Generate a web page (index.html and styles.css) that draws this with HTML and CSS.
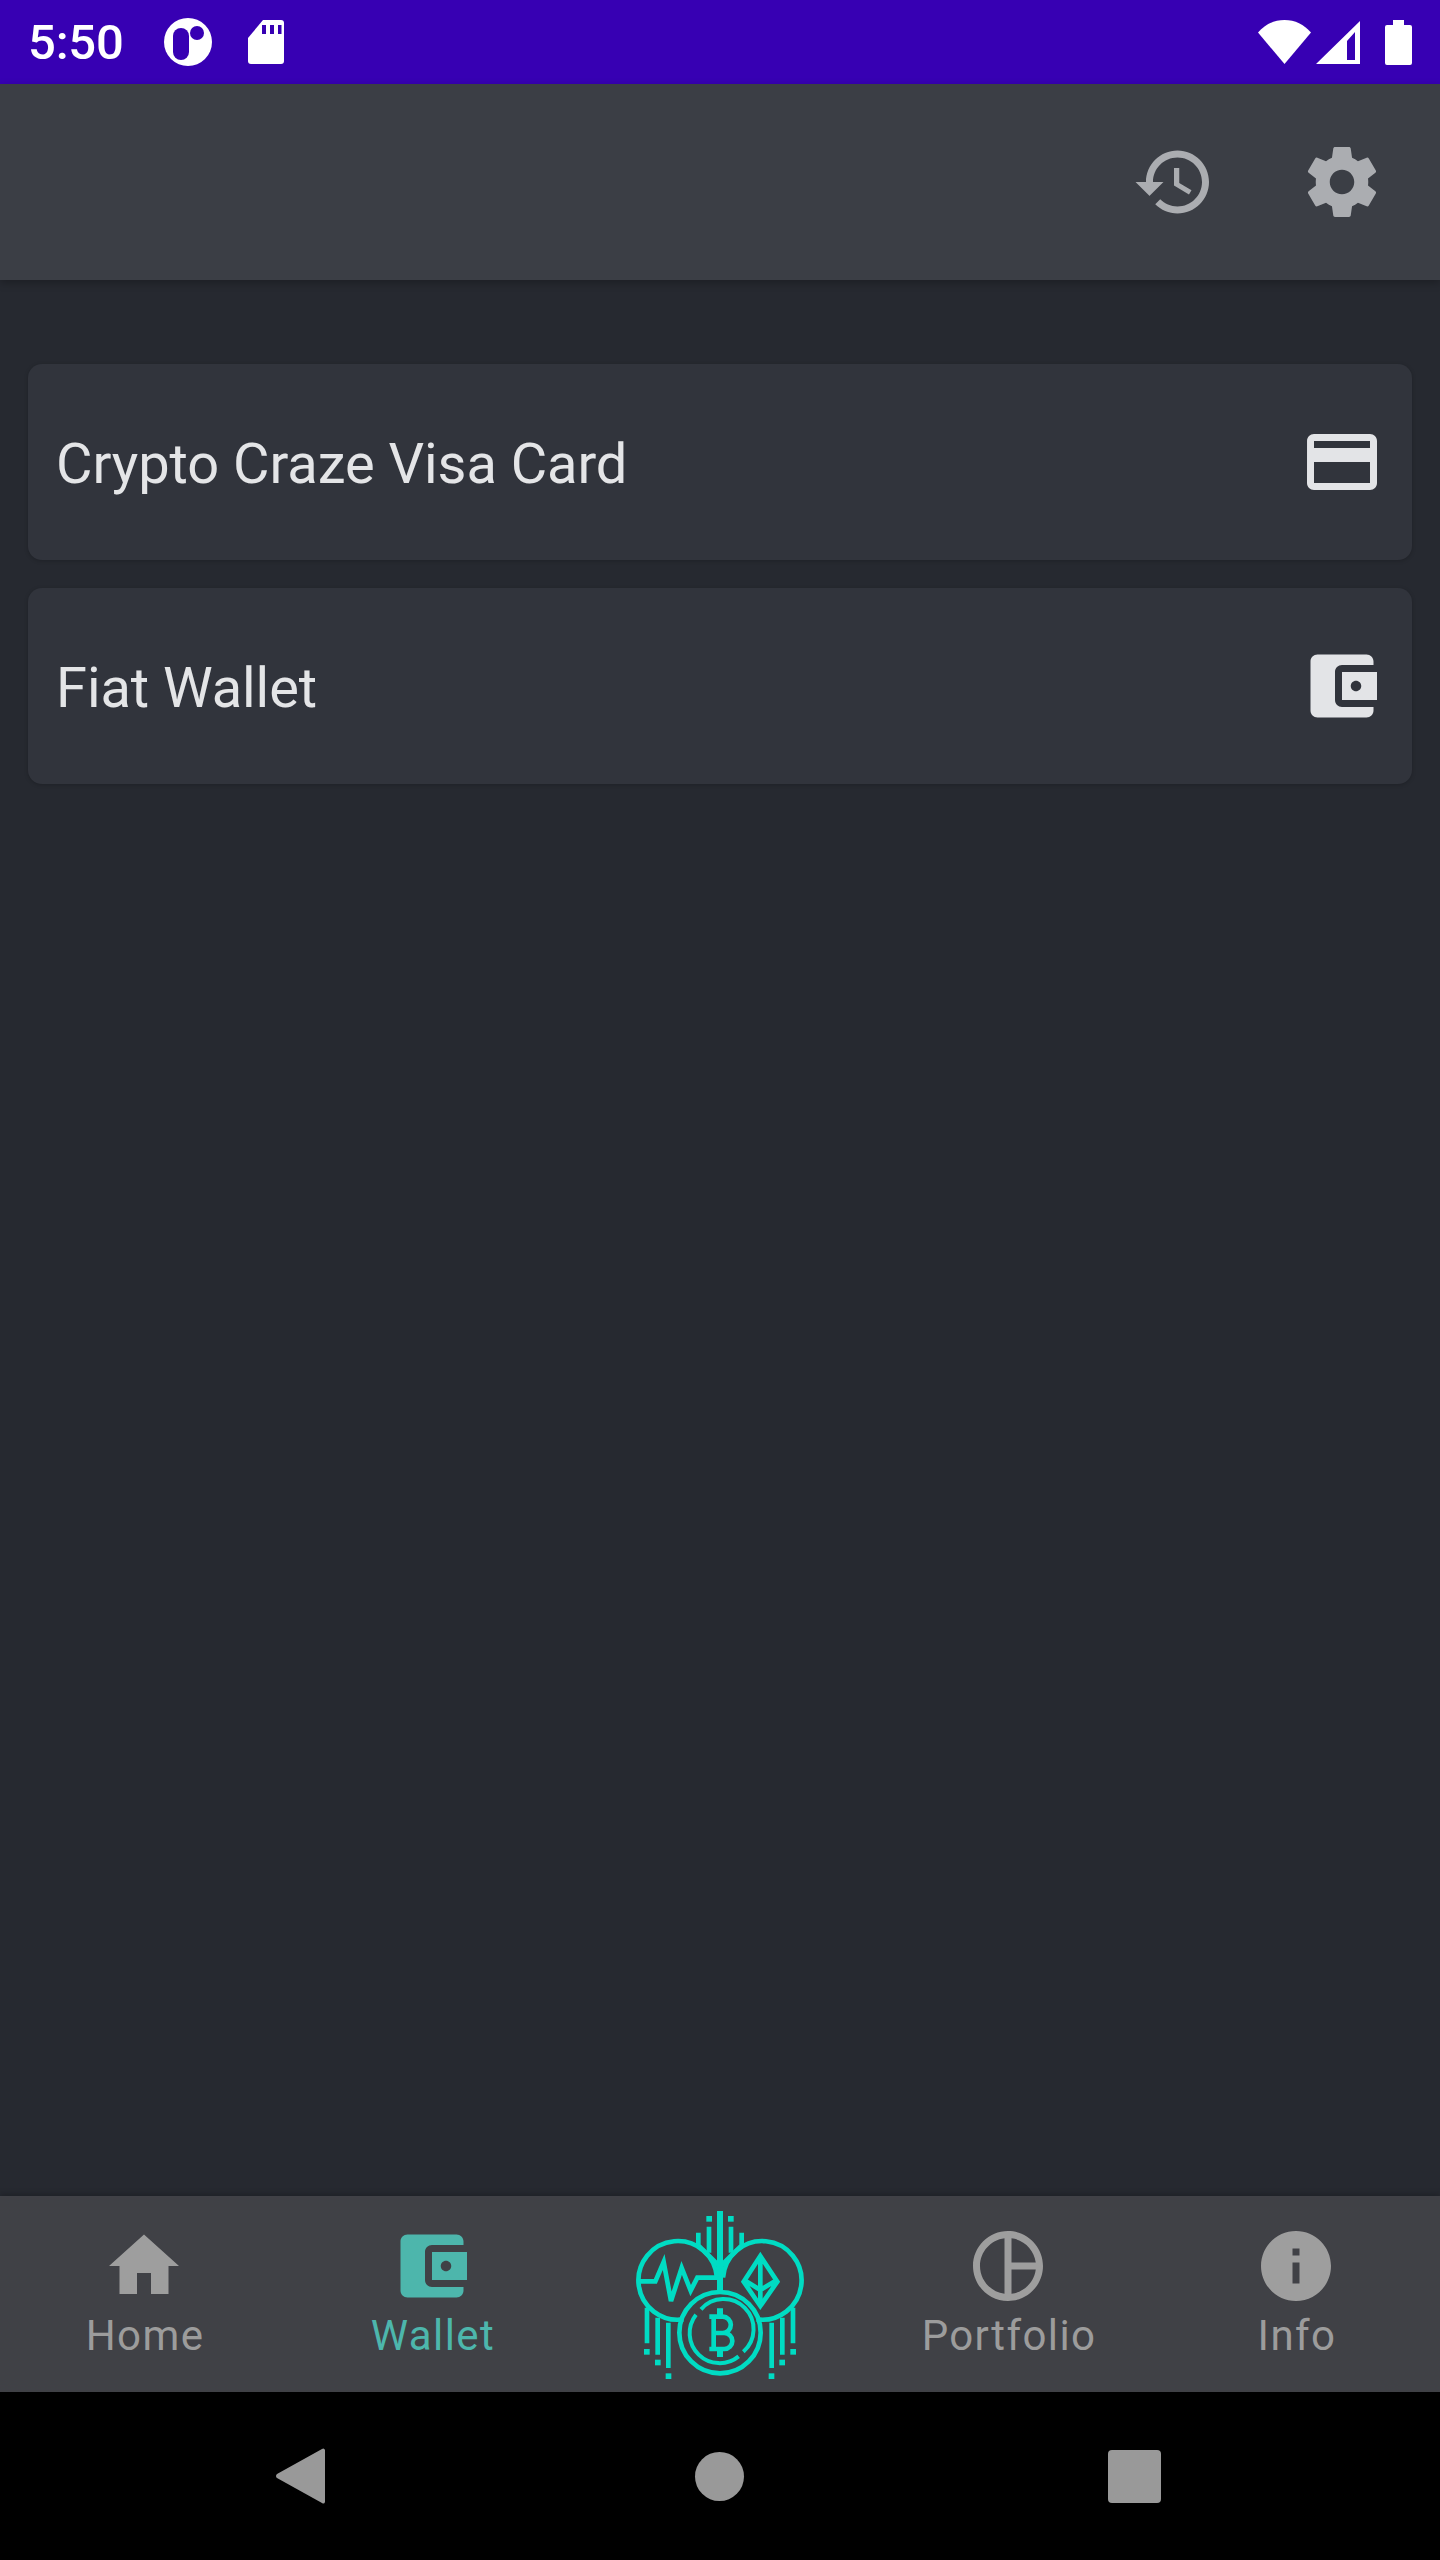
FILE: index.html
```html
<!DOCTYPE html>
<html lang="en">
<head>
<meta charset="utf-8">
<title>Crypto Craze Wallet</title>
<link rel="stylesheet" href="styles.css">
</head>
<body>
<div class="screen">
  <header class="status">
    <div class="status-left">
      <span class="clock">5:50</span>
      <svg class="ic-notif" viewBox="0 0 48 48"><circle class="white" cx="24" cy="24" r="24"/><rect class="purple" x="9" y="10" width="16" height="32" rx="8"/><circle class="purple" cx="33" cy="15" r="7"/></svg>
      <svg class="ic-sd" viewBox="0 0 36 44"><path class="white" d="M15 0H33a3 3 0 0 1 3 3V41a3 3 0 0 1-3 3H3a3 3 0 0 1-3-3V18z"/><rect class="purple" x="14" y="5" width="4" height="9"/><rect class="purple" x="22" y="5" width="4" height="9"/><rect class="purple" x="30" y="5" width="3.5" height="9"/></svg>
    </div>
    <div class="status-right">
      <svg class="ic-wifi" viewBox="0 0 53 44"><path class="white" d="M0 12.500C7 4.500 16 0 26.500 0S46 4.500 53 12.500L26.500 44z"/></svg>
      <svg class="ic-signal" viewBox="0 0 44 44"><path class="white" fill-rule="evenodd" d="M0 44H44V1zM31 21V40H39V12z"/></svg>
      <svg class="ic-battery" viewBox="0 0 27 45"><path class="white" d="M8 0H19V5H25a2 2 0 0 1 2 2V43a2 2 0 0 1-2 2H2a2 2 0 0 1-2-2V7a2 2 0 0 1 2-2H8z"/></svg>
    </div>
  </header>

  <div class="appbar">
    <svg class="ic-24 appbar-ic" viewBox="0 0 24 24"><path d="M13 3c-4.970 0-9 4.030-9 9H1l3.890 3.890.070.140L9 12H6c0-3.870 3.130-7 7-7s7 3.130 7 7-3.130 7-7 7c-1.930 0-3.680-.790-4.940-2.060l-1.420 1.420C8.270 19.990 10.510 21 13 21c4.970 0 9-4.030 9-9s-4.030-9-9-9zm-1 5v5l4.280 2.540.720-1.210-3.500-2.080V8H12z"/></svg>
    <svg class="ic-24 appbar-ic" viewBox="0 0 24 24"><path d="M19.430 12.980c.040-.320.070-.640.070-.980s-.030-.660-.070-.980l2.110-1.650c.190-.150.240-.420.120-.640l-2-3.460c-.120-.220-.390-.300-.610-.220l-2.490 1c-.520-.400-1.080-.730-1.690-.980l-.380-2.650C14.460 2.180 14.250 2 14 2h-4c-.250 0-.460.180-.490.420l-.380 2.650c-.610.250-1.170.590-1.690.980l-2.490-1c-.230-.090-.490 0-.610.220l-2 3.460c-.130.220-.070.490.120.640l2.110 1.650c-.040.320-.070.650-.070.980s.030.660.070.980l-2.110 1.650c-.190.150-.240.420-.120.640l2 3.460c.120.220.390.300.610.220l2.490-1c.520.400 1.080.730 1.690.980l.380 2.650c.030.240.240.420.490.420h4c.250 0 .460-.180.490-.420l.380-2.650c.610-.250 1.170-.590 1.690-.980l2.490 1c.230.090.490 0 .610-.220l2-3.460c.120-.220.070-.490-.120-.640l-2.110-1.650zM12 15.500c-1.930 0-3.500-1.570-3.500-3.500s1.570-3.500 3.500-3.500 3.500 1.570 3.500 3.500-1.570 3.500-3.500 3.500z"/></svg>
  </div>

  <main class="content">
    <div class="card">
      <span class="card-title">Crypto Craze Visa Card</span>
      <svg class="ic-24 card-ic" viewBox="0 0 24 24"><path d="M20 4H4c-1.110 0-1.990.890-1.990 2L2 18c0 1.110.890 2 2 2h16c1.110 0 2-.890 2-2V6c0-1.110-.890-2-2-2zm0 14H4v-6h16v6zm0-10H4V6h16v2z"/></svg>
    </div>
    <div class="card">
      <span class="card-title">Fiat Wallet</span>
      <svg class="ic-24 card-ic" viewBox="0 0 24 24"><path d="M21 18v1c0 1.100-.900 2-2 2H5c-1.110 0-2-.900-2-2V5c0-1.100.890-2 2-2h14c1.100 0 2 .900 2 2v1h-9c-1.110 0-2 .900-2 2v8c0 1.100.890 2 2 2h9zm-9-2h10V8H12v8zm4-2.500c-.830 0-1.500-.670-1.500-1.500s.670-1.500 1.500-1.500 1.500.670 1.500 1.500-.670 1.500-1.500 1.500z"/></svg>
    </div>
  </main>

  <nav class="tabs">
    <div class="tab">
      <svg class="ic-24" viewBox="0 0 24 24"><path d="M10 20v-6h4v6h5v-8h3L12 3 2 12h3v8z"/></svg>
      <span class="tab-label">Home</span>
    </div>
    <div class="tab tab-active">
      <svg class="ic-24" viewBox="0 0 24 24"><path d="M21 18v1c0 1.100-.900 2-2 2H5c-1.110 0-2-.900-2-2V5c0-1.100.890-2 2-2h14c1.100 0 2 .900 2 2v1h-9c-1.110 0-2 .900-2 2v8c0 1.100.890 2 2 2h9zm-9-2h10V8H12v8zm4-2.500c-.830 0-1.500-.670-1.500-1.500s.670-1.500 1.500-1.500 1.500.670 1.500 1.500-.670 1.500-1.500 1.500z"/></svg>
      <span class="tab-label">Wallet</span>
    </div>
    <div class="tab-logo">
      <svg class="logo" viewBox="0 0 600 585">
        <g class="logo-line">
          <path d="M190 370A118 118 0 1 1 291 245"/>
          <path d="M410 370A118 118 0 1 0 309 245"/>
          <path class="logo-trunk" d="M300 45V283"/>
          <path d="M235 110V148L300 212L365 148V110"/>
          <path d="M267 92V170M333 92V170"/>
          <path d="M56 256H106L131 198L153 315L185 216L212 284L232 245H296"/>
          <path d="M421 180L472 257L421 330L371 257zM421 180V330M376 254L421 282L467 254"/>
          <path d="M81 335V442M113 365V476M145 380V516M519 335V442M487 365V476M455 380V516"/>
          <circle cx="300" cy="410" r="122"/>
          <path class="logo-inner" d="M243 340A90 90 0 1 1 370 467"/>
          <path class="logo-inner" d="M228 356A90 90 0 0 0 356 481"/>
          <path d="M268 362H308A24.500 24.500 0 0 1 308 411H288H313A24 24 0 0 1 313 459H268M281 362V459"/>
          <path class="logo-trunk" d="M300 337V362M300 459V483"/>
        </g>
        <g class="logo-fill">
          <rect x="259" y="60" width="17" height="17"/><rect x="324" y="60" width="17" height="17"/>
          <rect x="72" y="459" width="17" height="17"/><rect x="105" y="491" width="17" height="17"/><rect x="137" y="532" width="17" height="17"/>
          <rect x="511" y="459" width="17" height="17"/><rect x="478" y="491" width="17" height="17"/><rect x="446" y="532" width="17" height="17"/>
        </g>
      </svg>
    </div>
    <div class="tab">
      <svg class="ic-24" viewBox="0 0 24 24"><path d="M12 2C6.490 2 2 6.490 2 12s4.490 10 10 10 10-4.490 10-10S17.510 2 12 2zm1 2.070c3.610.450 6.480 3.330 6.930 6.930H13V4.070zM4 12c0-4.060 3.070-7.440 7-7.930v15.870c-3.930-.500-7-3.880-7-7.940zm9 7.930V13h6.930c-.450 3.610-3.320 6.480-6.930 6.930z"/></svg>
      <span class="tab-label">Portfolio</span>
    </div>
    <div class="tab">
      <svg class="ic-24" viewBox="0 0 24 24"><path d="M12 2C6.480 2 2 6.480 2 12s4.480 10 10 10 10-4.480 10-10S17.520 2 12 2zm1 15h-2v-6h2v6zm0-8h-2V7h2v2z"/></svg>
      <span class="tab-label">Info</span>
    </div>
  </nav>

  <footer class="sysnav">
    <svg class="sys-back" viewBox="0 0 49 56"><path class="sys-shape" d="M46 1L1 26a2.500 2.500 0 0 0 0 4L46 55a2 2 0 0 0 3-1V2a2 2 0 0 0-3-1z"/></svg>
    <span class="sys-home"></span>
    <span class="sys-recent"></span>
  </footer>
</div>
</body>
</html>
```

FILE: styles.css
```css
* { box-sizing: border-box; }
html, body { margin: 0; padding: 0; }
body { background: #262930; font-family: Roboto, "Liberation Sans", sans-serif; }
.screen { width: 1440px; height: 2560px; display: flex; flex-direction: column; overflow: hidden; }
svg { display: block; }
.white { fill: #fff; }
.purple { fill: #3700b3; }

.status { height: 84px; flex: none; background: #3700b3; display: flex; justify-content: space-between; align-items: center; padding: 0 28px; }
.status-left, .status-right { display: flex; align-items: center; }
.clock { color: #fff; font-size: 49px; line-height: 84px; font-weight: 500; width: 136px; letter-spacing: -.2px; padding-top: 1px; }
.ic-notif { width: 48px; height: 48px; }
.ic-sd { width: 36px; height: 44px; margin-left: 36px; }
.ic-wifi { width: 53px; height: 44px; margin-right: 5px; }
.ic-signal { width: 44px; height: 44px; margin-right: 25px; }
.ic-battery { width: 27px; height: 45px; }

.ic-24 { width: 84px; height: 84px; flex: none; }
.appbar { height: 196px; flex: none; background: #3b3e45; display: flex; justify-content: flex-end; align-items: center; gap: 84px; padding-right: 56px; box-shadow: 0 3px 8px rgba(0,0,0,.25); position: relative; }
.appbar-ic path { fill: #abadb1; }

.content { flex: 1; display: flex; flex-direction: column; gap: 28px; padding: 84px 28px 0; }
.card { height: 196px; background: #31343c; border-radius: 14px; display: flex; justify-content: space-between; align-items: center; padding: 0 28px; box-shadow: 0 1px 4px rgba(0,0,0,.2); }
.card-title { font-size: 56px; color: #e4e5e7; letter-spacing: -.06px; padding-top: 3px; }
.card-ic path { fill: #e3e4e7; }

.tabs { height: 196px; flex: none; background: #404146; display: grid; grid-template-columns: repeat(5, 288px); box-shadow: 0 -2px 6px rgba(0,0,0,.2); position: relative; }
.tab { display: flex; flex-direction: column; align-items: center; padding-top: 28px; color: #9c9c9c; }
.tab path { fill: #9e9e9e; }
.tab-label { font-size: 42px; line-height: 56px; letter-spacing: 1.4px; padding-left: 2px; }
.tab-active { color: #4db6ac; }
.tab-active path { fill: #4db6ac; }
.tab-logo { display: flex; justify-content: center; }
.logo { width: 200px; height: 195px; }
.logo-line { fill: none; stroke: #00dcc3; stroke-width: 14; }
.logo-trunk { stroke-width: 18; }
.logo-inner { stroke-width: 12; }
.logo-fill { fill: #00dcc3; }

.sysnav { height: 168px; flex: none; background: #000; display: flex; align-items: center; padding-left: 276px; }
.sys-shape { fill: #999; }
.sys-back { width: 49px; height: 56px; }
.sys-home { width: 49px; height: 49px; border-radius: 50%; background: #999; margin-left: 370px; }
.sys-recent { width: 53px; height: 53px; border-radius: 4px; background: #999; margin-left: 364px; }
```
